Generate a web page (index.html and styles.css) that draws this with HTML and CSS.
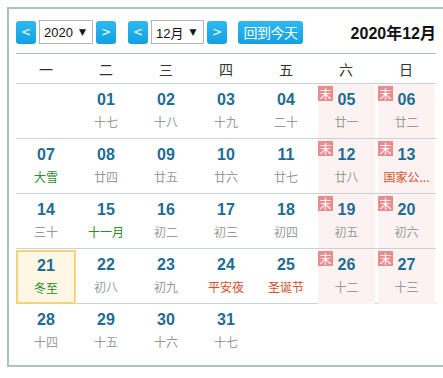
FILE: index.html
```html
<!DOCTYPE html>
<html lang="zh">
<head>
<meta charset="utf-8">
<link rel="stylesheet" href="styles.css">
</head>
<body>
<div class="cal">
  <div class="head">
    <span class="btn arrow">&lt;</span>
    <span class="sel y">2020 <i>▼</i></span>
    <span class="btn arrow">&gt;</span>
    <span class="btn arrow m">&lt;</span>
    <span class="sel mo">12月 <i>▼</i></span>
    <span class="btn arrow">&gt;</span>
    <span class="btn today">回到今天</span>
    <span class="title">2020年12月</span>
  </div>
  <div class="week">
    <span>一</span><span>二</span><span>三</span><span>四</span><span>五</span><span>六</span><span>日</span>
  </div>
  <div class="row">
    <div class="cell"></div>
    <div class="cell"><b>01</b><em>十七</em></div>
    <div class="cell"><b>02</b><em>十八</em></div>
    <div class="cell"><b>03</b><em>十九</em></div>
    <div class="cell"><b>04</b><em>二十</em></div>
    <div class="cell we"><span class="mo2">末</span><b>05</b><em>廿一</em></div>
    <div class="cell we"><span class="mo2">末</span><b>06</b><em>廿二</em></div>
  </div>
  <div class="row">
    <div class="cell"><b>07</b><em class="g">大雪</em></div>
    <div class="cell"><b>08</b><em>廿四</em></div>
    <div class="cell"><b>09</b><em>廿五</em></div>
    <div class="cell"><b>10</b><em>廿六</em></div>
    <div class="cell"><b>11</b><em>廿七</em></div>
    <div class="cell we"><span class="mo2">末</span><b>12</b><em>廿八</em></div>
    <div class="cell we"><span class="mo2">末</span><b>13</b><em class="r">国家公...</em></div>
  </div>
  <div class="row">
    <div class="cell"><b>14</b><em>三十</em></div>
    <div class="cell"><b>15</b><em class="g">十一月</em></div>
    <div class="cell"><b>16</b><em>初二</em></div>
    <div class="cell"><b>17</b><em>初三</em></div>
    <div class="cell"><b>18</b><em>初四</em></div>
    <div class="cell we"><span class="mo2">末</span><b>19</b><em>初五</em></div>
    <div class="cell we"><span class="mo2">末</span><b>20</b><em>初六</em></div>
  </div>
  <div class="row">
    <div class="cell now"><b>21</b><em class="g">冬至</em></div>
    <div class="cell"><b>22</b><em>初八</em></div>
    <div class="cell"><b>23</b><em>初九</em></div>
    <div class="cell"><b>24</b><em class="r">平安夜</em></div>
    <div class="cell"><b>25</b><em class="r">圣诞节</em></div>
    <div class="cell we"><span class="mo2">末</span><b>26</b><em>十二</em></div>
    <div class="cell we"><span class="mo2">末</span><b>27</b><em>十三</em></div>
  </div>
  <div class="row last">
    <div class="cell"><b>28</b><em>十四</em></div>
    <div class="cell"><b>29</b><em>十五</em></div>
    <div class="cell"><b>30</b><em>十六</em></div>
    <div class="cell"><b>31</b><em>十七</em></div>
    <div class="cell"></div>
    <div class="cell"></div>
    <div class="cell"></div>
  </div>
</div>
</body>
</html>
```
FILE: styles.css
```css
html, body {
  margin: 0;
  background: #fff;
}
body {
  font-family: "Liberation Sans", "Noto Sans CJK SC", sans-serif;
  overflow: hidden;
}
.cal {
  margin: 7px 0 0 7px;
  width: 420px;
  padding: 0 7px 6px 7px;
  border: 2px solid #a9c6b5;
  background: #fff;
}
.head {
  display: flex;
  align-items: center;
  height: 24px;
  padding: 11px 0 9px;
  border-bottom: 1px solid #a9bcc3;
}
.btn {
  display: flex;
  align-items: center;
  justify-content: center;
  height: 23px;
  border-radius: 3px;
  background: linear-gradient(#2dbaf2, #12a0e1);
  color: #fff;
  font-size: 13px;
}
.arrow {
  width: 20px;
  margin-right: 3px;
  font-family: "DejaVu Sans", sans-serif;
  font-size: 12px;
}
.arrow.m {
  margin-left: 9px;
}
.sel {
  display: flex;
  align-items: center;
  box-sizing: border-box;
  height: 24px;
  border: 1px solid #b4b4b4;
  background: #fff;
  margin-right: 3px;
  padding-left: 4px;
  font-size: 13px;
  color: #111;
}
.sel i {
  font-style: normal;
  font-size: 9px;
  margin-left: 6px;
  font-family: "DejaVu Sans", sans-serif;
}
.sel.y { width: 54px; }
.sel.mo { width: 53px; }
.today {
  margin-left: 8px;
  width: 65px;
  font-family: "Noto Sans CJK SC", sans-serif;
  font-size: 14px;
  letter-spacing: -0.5px;
}
.title {
  margin-left: auto;
  font-weight: bold;
  font-size: 16px;
  color: #111;
  font-family: "Liberation Sans", "Noto Sans CJK SC", sans-serif;
}
.week {
  display: grid;
  grid-template-columns: repeat(7, 60px);
  height: 29px;
  align-items: center;
  border-bottom: 1px solid #c9d3d6;
  font-family: "Noto Sans CJK SC", sans-serif;
  font-size: 14px;
  color: #333;
  text-align: center;
}
.row {
  display: grid;
  grid-template-columns: repeat(7, 60px);
  height: 54px;
  border-bottom: 1px solid #c9d3d6;
}
.row.last {
  border-bottom: none;
  height: 55px;
}
.cell {
  position: relative;
  display: flex;
  flex-direction: column;
  align-items: center;
  box-sizing: border-box;
}
.cell b {
  margin-top: 6px;
  line-height: 20px;
  font-size: 16px;
  font-weight: bold;
  color: #1e6b95;
}
.cell em {
  margin-top: 3px;
  line-height: 18px;
  font-style: normal;
  font-size: 12px;
  color: #999;
  font-family: "Noto Sans CJK SC", sans-serif;
  white-space: nowrap;
}
.cell em.g { color: #2e8b2e; }
.cell em.r { color: #d2502a; }
.cell.we {
  margin: 0 1px 0 2px;
  background: #fdf2f2;
}
.mo2 {
  position: absolute;
  left: 0;
  top: 2px;
  width: 15px;
  height: 15px;
  background: #e98c8c;
  color: #fff;
  font-size: 12px;
  line-height: 15px;
  text-align: center;
  font-family: "Noto Sans CJK SC", sans-serif;
}
.cell.now {
  border: 2px solid #f3d27b;
  background: #fdf7e3;
  margin-top: 1px;
  height: 54px;
}
.cell.now b { margin-top: 4px; }
```
